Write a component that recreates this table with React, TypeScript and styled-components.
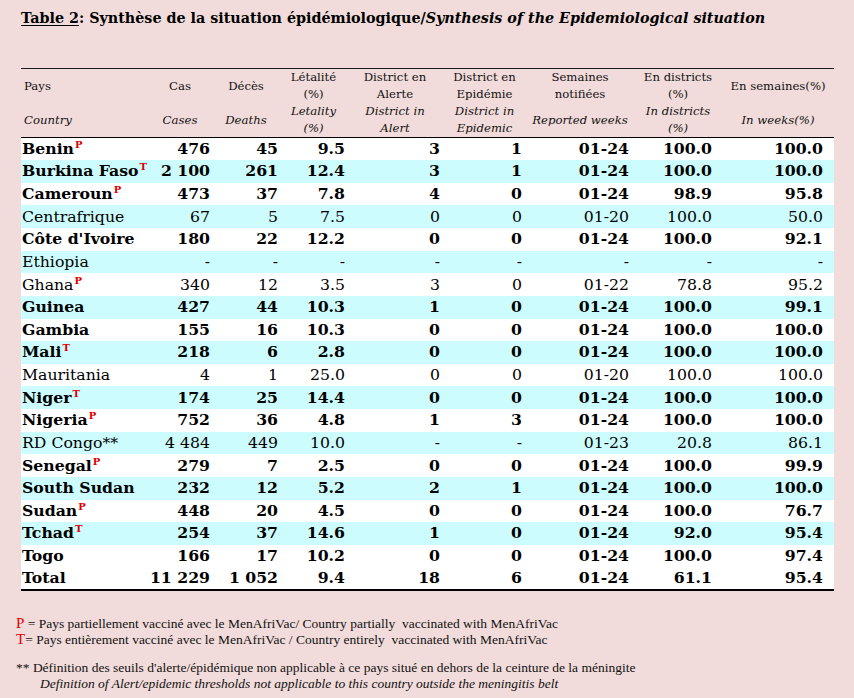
import React from "react";
import styled, { createGlobalStyle } from "styled-components";

const GlobalStyle = createGlobalStyle`
    html, body {
        margin: 0;
        padding: 0;
        background: #f2dcdb;
    }
    body {
        font-family: "DejaVu Serif", "Liberation Serif", serif;
        color: #000;
    }
`;

type Row = {
    name: string;
    mark?: "P" | "T";
    bold: boolean;
    values: string[];
};

const rows: Row[] = [
    { name: "Benin", mark: "P", bold: true, values: ["476", "45", "9.5", "3", "1", "01-24", "100.0", "100.0"] },
    { name: "Burkina Faso", mark: "T", bold: true, values: ["2 100", "261", "12.4", "3", "1", "01-24", "100.0", "100.0"] },
    { name: "Cameroun", mark: "P", bold: true, values: ["473", "37", "7.8", "4", "0", "01-24", "98.9", "95.8"] },
    { name: "Centrafrique", bold: false, values: ["67", "5", "7.5", "0", "0", "01-20", "100.0", "50.0"] },
    { name: "Côte d'Ivoire", bold: true, values: ["180", "22", "12.2", "0", "0", "01-24", "100.0", "92.1"] },
    { name: "Ethiopia", bold: false, values: ["-", "-", "-", "-", "-", "-", "-", "-"] },
    { name: "Ghana", mark: "P", bold: false, values: ["340", "12", "3.5", "3", "0", "01-22", "78.8", "95.2"] },
    { name: "Guinea", bold: true, values: ["427", "44", "10.3", "1", "0", "01-24", "100.0", "99.1"] },
    { name: "Gambia", bold: true, values: ["155", "16", "10.3", "0", "0", "01-24", "100.0", "100.0"] },
    { name: "Mali", mark: "T", bold: true, values: ["218", "6", "2.8", "0", "0", "01-24", "100.0", "100.0"] },
    { name: "Mauritania", bold: false, values: ["4", "1", "25.0", "0", "0", "01-20", "100.0", "100.0"] },
    { name: "Niger", mark: "T", bold: true, values: ["174", "25", "14.4", "0", "0", "01-24", "100.0", "100.0"] },
    { name: "Nigeria", mark: "P", bold: true, values: ["752", "36", "4.8", "1", "3", "01-24", "100.0", "100.0"] },
    { name: "RD Congo**", bold: false, values: ["4 484", "449", "10.0", "-", "-", "01-23", "20.8", "86.1"] },
    { name: "Senegal", mark: "P", bold: true, values: ["279", "7", "2.5", "0", "0", "01-24", "100.0", "99.9"] },
    { name: "South Sudan", bold: true, values: ["232", "12", "5.2", "2", "1", "01-24", "100.0", "100.0"] },
    { name: "Sudan", mark: "P", bold: true, values: ["448", "20", "4.5", "0", "0", "01-24", "100.0", "76.7"] },
    { name: "Tchad", mark: "T", bold: true, values: ["254", "37", "14.6", "1", "0", "01-24", "92.0", "95.4"] },
    { name: "Togo", bold: true, values: ["166", "17", "10.2", "0", "0", "01-24", "100.0", "97.4"] },
    { name: "Total", bold: true, values: ["11 229", "1 052", "9.4", "18", "6", "01-24", "61.1", "95.4"] },
];

// column widths and right padding of the number cells
const widths = [127, 64, 68, 67, 96, 83, 108, 88, 112];
const pads = [2, 2, 2, 3, 4, 5, 10, 11];

const Page = styled.div`
    padding: 8px 20px 0 21px;
    width: 854px;
    box-sizing: border-box;
`;

const Title = styled.h1`
    margin: 0 0 40px 0;
    font-size: 14.3px;
    font-weight: bold;
    line-height: 20px;
    white-space: nowrap;
`;

const Underlined = styled.span`
    text-decoration: underline;
    text-underline-offset: 2px;
`;

const TitleItalic = styled.em`
    font-style: italic;
`;

const Table = styled.table`
    border-collapse: collapse;
    table-layout: fixed;
    width: 813px;
    border-top: 1px solid #1a1a1a;
    border-bottom: 2px solid #000;
`;

const HeadCell = styled.th<{ $left?: boolean; $italic?: boolean }>`
    font-size: 11.7px;
    font-weight: normal;
    font-style: ${p => (p.$italic ? "italic" : "normal")};
    line-height: 17px;
    height: 34px;
    padding: 0 0 0 ${p => (p.$left ? "3px" : "0")};
    text-align: ${p => (p.$left ? "left" : "center")};
    vertical-align: middle;
    color: #111;
    white-space: nowrap;
`;

const HeadBottom = styled.tr`
    border-bottom: 1.5px solid #000;
`;

const BodyRow = styled.tr<{ $shade: boolean }>`
    background: ${p => (p.$shade ? "#ccfcfd" : "#ffffff")};
    height: 22.63px;
`;

const NameCell = styled.td<{ $bold: boolean }>`
    font-size: 15.7px;
    font-weight: ${p => (p.$bold ? "bold" : "normal")};
    line-height: 20px;
    padding: 0 0 0 1px;
    white-space: nowrap;
    overflow: visible;
`;

const NumCell = styled.td<{ $bold: boolean; $pad: number }>`
    font-size: 15.7px;
    font-weight: ${p => (p.$bold ? "bold" : "normal")};
    line-height: 20px;
    padding: 0 ${p => p.$pad}px 0 0;
    text-align: right;
    white-space: nowrap;
`;

const Sup = styled.sup`
    color: #e00000;
    font-size: 10px;
    font-weight: bold;
    line-height: 0;
    vertical-align: 6px;
    margin-left: 1px;
`;

const Notes = styled.div`
    margin: 25px 0 0 -5px;
    font-family: "Liberation Serif", serif;
    font-size: 13.5px;
    line-height: 15.5px;
    color: #111;
`;

const NoteLine = styled.div<{ $indent?: number; $italic?: boolean; $gap?: number }>`
    height: 15.5px;
    padding-left: ${p => p.$indent || 0}px;
    margin-top: ${p => p.$gap || 0}px;
    font-style: ${p => (p.$italic ? "italic" : "normal")};
    white-space: nowrap;
`;

const Mark = styled.span`
    color: #e00000;
    font-size: 15px;
    line-height: 0;
`;

const headFr: React.ReactNode[] = [
    "Pays",
    "Cas",
    "Décès",
    <>Létalité<br />(%)</>,
    <>District en<br />Alerte</>,
    <>District en<br />Epidémie</>,
    <>Semaines<br />notifiées</>,
    <>En districts<br />(%)</>,
    "En semaines(%)",
];

const headEn: React.ReactNode[] = [
    "Country",
    "Cases",
    "Deaths",
    <>Letality<br />(%)</>,
    <>District in<br />Alert</>,
    <>District in<br />Epidemic</>,
    "Reported weeks",
    <>In districts<br />(%)</>,
    "In weeks(%)",
];

export default function App() {
    return (
        <Page>
            <GlobalStyle />
            <Title>
                <Underlined>Table 2</Underlined>: Synthèse de la situation épidémiologique/
                <TitleItalic>Synthesis of the Epidemiological situation</TitleItalic>
            </Title>
            <Table>
                <colgroup>
                    {widths.map((w, i) => (
                        <col key={i} style={{ width: w }} />
                    ))}
                </colgroup>
                <thead>
                    <tr>
                        {headFr.map((h, i) => (
                            <HeadCell key={i} $left={i === 0}>{h}</HeadCell>
                        ))}
                    </tr>
                    <HeadBottom>
                        {headEn.map((h, i) => (
                            <HeadCell key={i} $left={i === 0} $italic>{h}</HeadCell>
                        ))}
                    </HeadBottom>
                </thead>
                <tbody>
                    {rows.map((r, i) => (
                        <BodyRow key={r.name} $shade={i % 2 === 1 && r.name !== "Total"}>
                            <NameCell $bold={r.bold}>
                                {r.name}
                                {r.mark && <Sup>{r.mark}</Sup>}
                            </NameCell>
                            {r.values.map((v, j) => (
                                <NumCell key={j} $bold={r.bold} $pad={pads[j]}>{v}</NumCell>
                            ))}
                        </BodyRow>
                    ))}
                </tbody>
            </Table>
            <Notes>
                <NoteLine><Mark>P</Mark> = Pays partiellement vacciné avec le MenAfriVac/ Country partially&nbsp; vaccinated with MenAfriVac</NoteLine>
                <NoteLine><Mark>T</Mark>= Pays entièrement vacciné avec le MenAfriVac / Country entirely&nbsp; vaccinated with MenAfriVac</NoteLine>
                <NoteLine $gap={13}>** Définition des seuils d'alerte/épidémique non applicable à ce pays situé en dehors de la ceinture de la méningite</NoteLine>
                <NoteLine $indent={24} $italic>Definition of Alert/epidemic thresholds not applicable to this country outside the meningitis belt</NoteLine>
            </Notes>
        </Page>
    );
}
